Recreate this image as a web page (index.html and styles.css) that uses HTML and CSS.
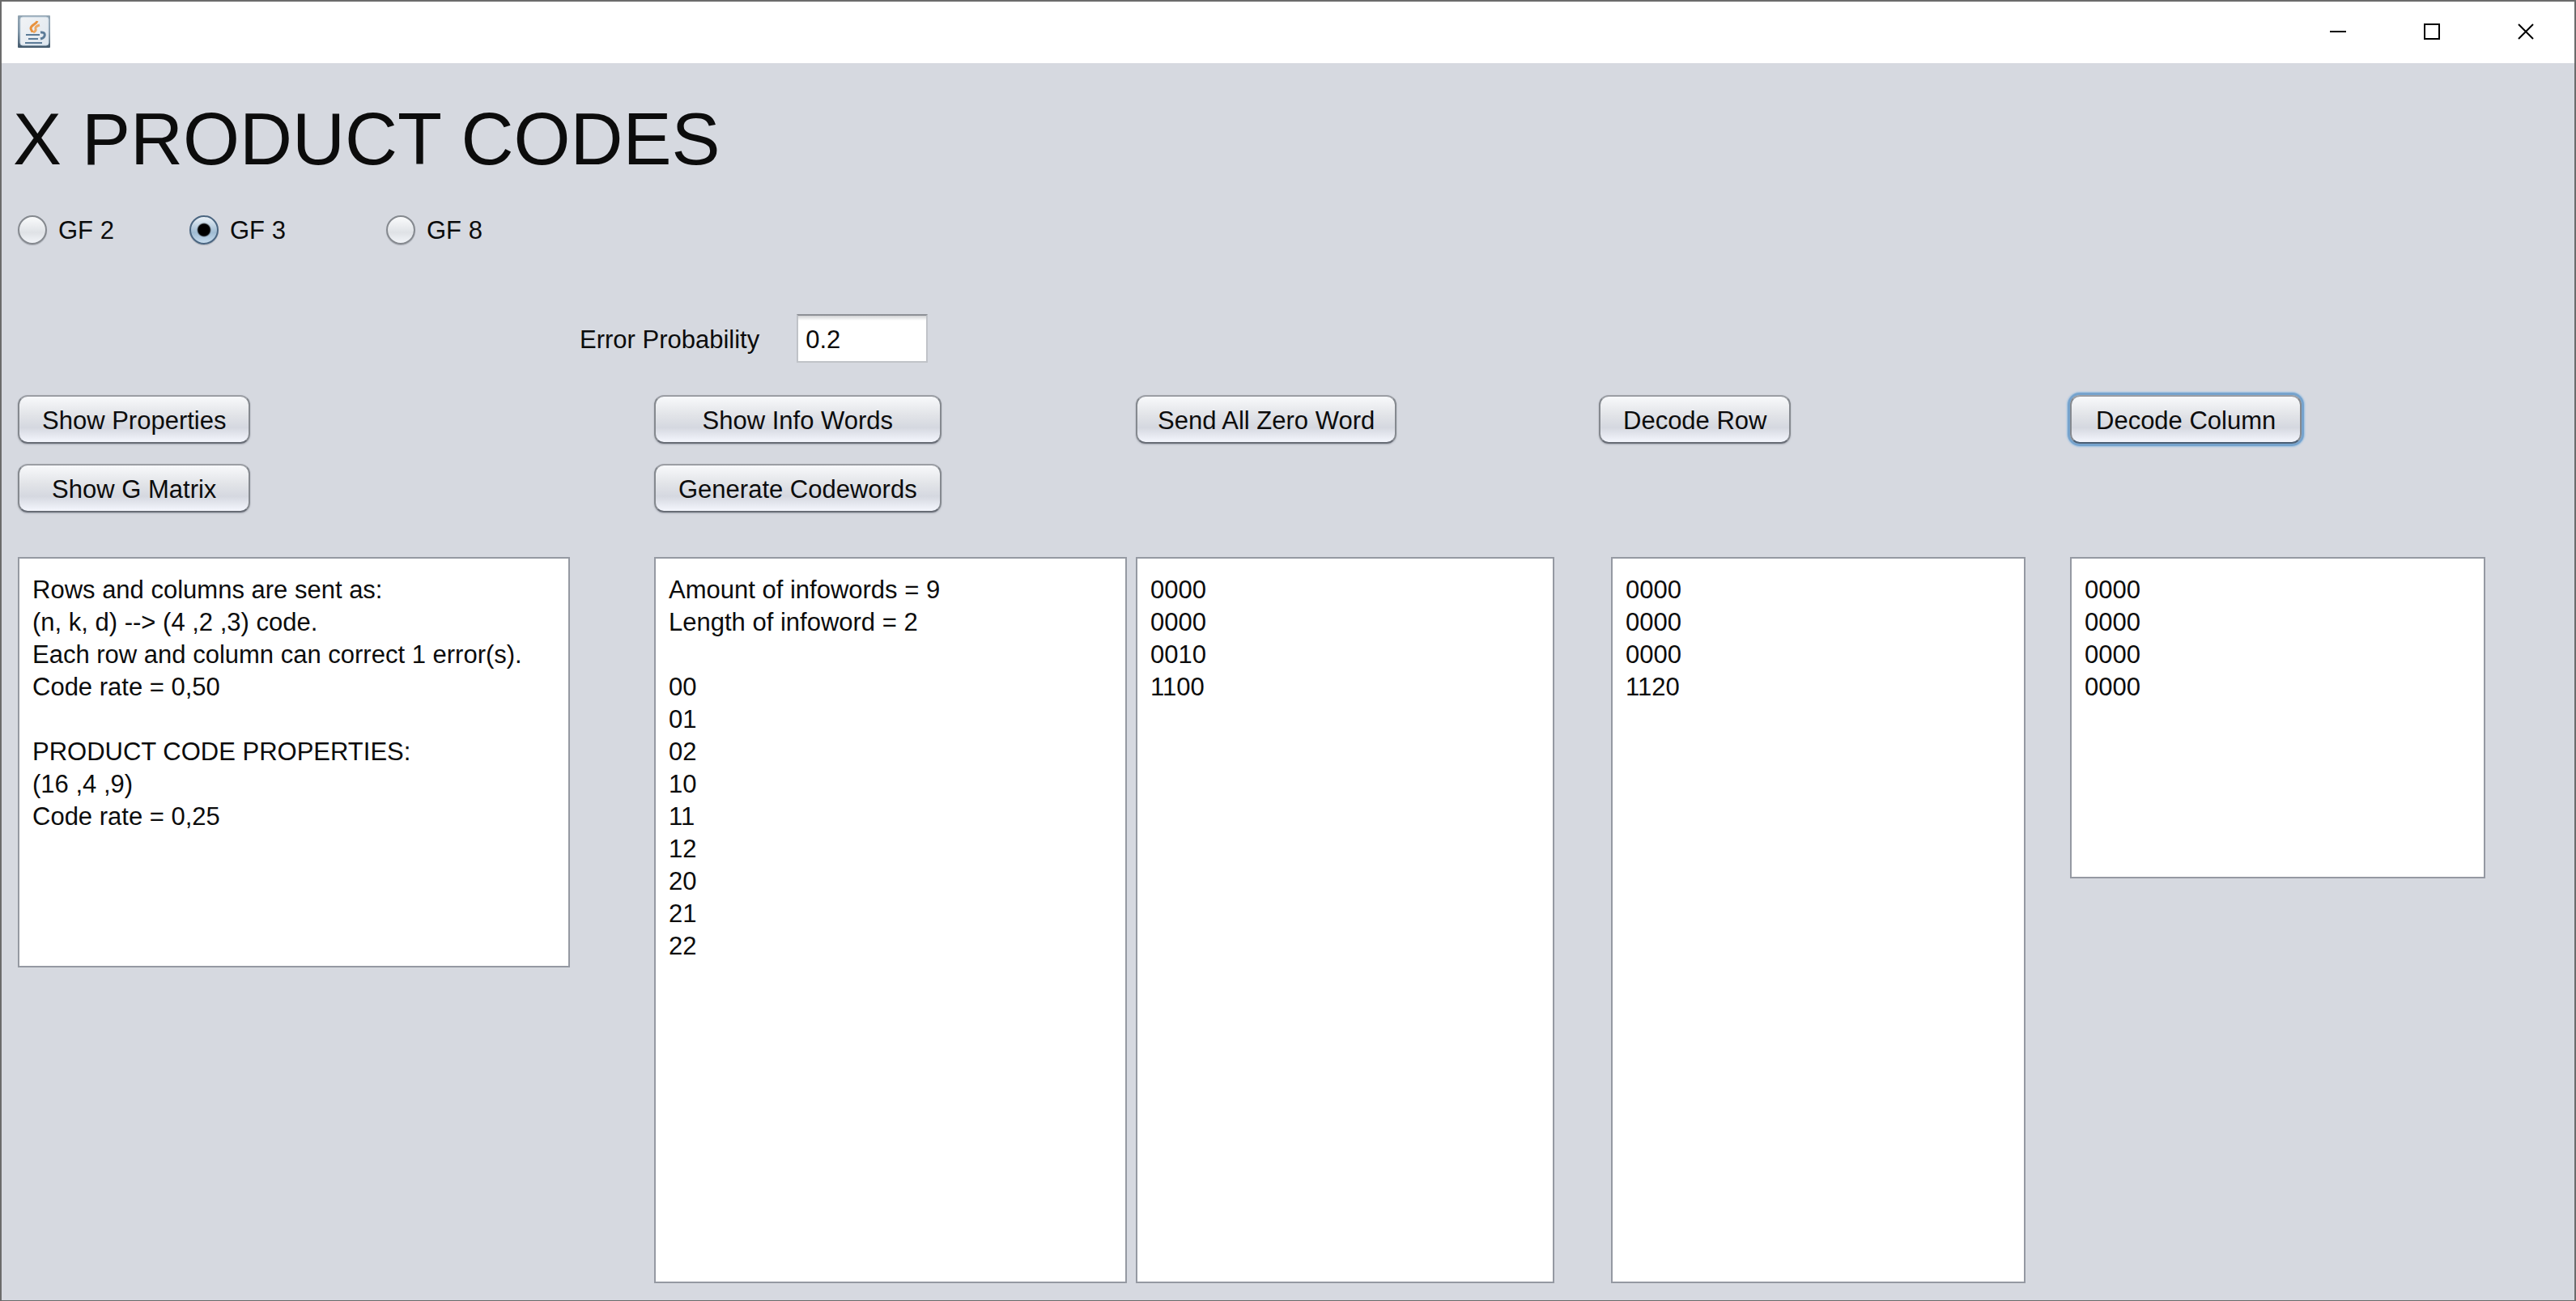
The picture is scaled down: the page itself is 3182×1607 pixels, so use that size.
FILE: index.html
```html
<!DOCTYPE html>
<html lang="en">
<head>
<meta charset="utf-8">
<title>X Product Codes</title>
<link rel="stylesheet" href="styles.css">
</head>
<body>
<div class="window">
  <header class="titlebar">
    <svg class="app-icon" viewBox="0 0 40 40" aria-hidden="true">
      <defs>
        <linearGradient id="frame" x1="0" y1="0" x2="0" y2="1">
          <stop offset="0" stop-color="#92a4b2"/>
          <stop offset="0.5" stop-color="#7d93a5"/>
          <stop offset="1" stop-color="#42586b"/>
        </linearGradient>
        <linearGradient id="plate" x1="0" y1="0" x2="1" y2="1">
          <stop offset="0" stop-color="#f1f3f5"/>
          <stop offset="1" stop-color="#dfe7ef"/>
        </linearGradient>
      </defs>
      <rect width="40" height="40" rx="1" fill="url(#frame)"/>
      <rect x="3" y="2" width="35" height="35" rx="3" fill="url(#plate)" stroke="#c3d3e0"/>
      <path d="M24 7c-1 4-8 5-8 9 0 2 2 3 2 5" fill="none" stroke="#e8913c" stroke-width="3"/>
      <path d="M27 12c-4 1-6 3-5 5 1 2-1 3-3 4" fill="none" stroke="#eda762" stroke-width="3"/>
      <path d="M10 24h17M13 29h12M9 34h21" fill="none" stroke="#5b7b98" stroke-width="2"/>
      <path d="M28 21c7-1 7 6 0 8" fill="none" stroke="#5b7b98" stroke-width="3"/>
    </svg>
    <div class="window-controls">
      <button class="control" aria-label="Minimize"><svg viewBox="0 0 20 20"><path d="M0 10h20"/></svg></button>
      <button class="control" aria-label="Maximize"><svg viewBox="0 0 20 20"><path d="M1 1h18v18H1z"/></svg></button>
      <button class="control" aria-label="Close"><svg viewBox="0 0 20 20"><path d="M1 1l18 18M19 1L1 19"/></svg></button>
    </div>
  </header>

  <main class="client">
    <h1 class="title">X PRODUCT CODES</h1>

    <div class="fields" role="radiogroup" aria-label="Field">
      <label class="field"><input class="radio" type="radio" name="gf">GF 2</label>
      <label class="field"><input class="radio" type="radio" name="gf" checked>GF 3</label>
      <label class="field"><input class="radio" type="radio" name="gf">GF 8</label>
    </div>

    <div class="error-row">
      <label for="error">Error Probability</label>
      <input class="textbox" id="error" type="text" value="0.2">
    </div>

    <div class="columns">
      <section class="column properties">
        <div class="actions">
          <button class="button">Show Properties</button>
          <button class="button">Show G Matrix</button>
        </div>
        <textarea class="output" aria-label="Properties" readonly>Rows and columns are sent as:
(n, k, d) --&gt; (4 ,2 ,3) code.
Each row and column can correct 1 error(s).
Code rate = 0,50

PRODUCT CODE PROPERTIES:
(16 ,4 ,9)
Code rate = 0,25</textarea>
      </section>
      <section class="column words">
        <div class="actions">
          <button class="button">Show Info Words</button>
          <button class="button">Generate Codewords</button>
        </div>
        <textarea class="output" aria-label="Info words" readonly>Amount of infowords = 9
Length of infoword = 2

00
01
02
10
11
12
20
21
22</textarea>
      </section>
      <section class="column sent">
        <div class="actions">
          <button class="button">Send All Zero Word</button>
        </div>
        <textarea class="output" aria-label="Received word" readonly>0000
0000
0010
1100</textarea>
      </section>
      <section class="column rows">
        <div class="actions">
          <button class="button">Decode Row</button>
        </div>
        <textarea class="output" aria-label="Decoded rows" readonly>0000
0000
0000
1120</textarea>
      </section>
      <section class="column cols">
        <div class="actions">
          <button class="button focused">Decode Column</button>
        </div>
        <textarea class="output" aria-label="Decoded columns" readonly>0000
0000
0000
0000</textarea>
      </section>
    </div>
  </main>
</div>
</body>
</html>
```
FILE: styles.css
```css
* {
  box-sizing: border-box;
}

body {
  margin: 0;
  color: #0c0c0c;
  font: 31px/40px "Liberation Sans", Arial, sans-serif;
}

button,
input,
textarea {
  margin: 0;
  color: inherit;
  font: inherit;
}

.window {
  display: flex;
  flex-direction: column;
  min-height: 100vh;
  border: 2px solid #6b6b6b;
  border-bottom-width: 1px;
  background: #d6d9e0;
}

/* Title bar */
.titlebar {
  display: flex;
  align-items: center;
  justify-content: space-between;
  height: 76px;
  padding: 0 2px 2px 20px;
  background: #fff;
}

.app-icon {
  width: 40px;
  height: 40px;
}

.window-controls {
  display: flex;
}

.control {
  display: flex;
  align-items: center;
  justify-content: center;
  width: 116px;
  height: 72px;
  padding: 0;
  border: 0;
  background: none;
}

.control svg {
  width: 20px;
  height: 20px;
  fill: none;
  stroke: #000;
  stroke-width: 2;
}

/* Form */
.client {
  display: flex;
  flex: 1;
  flex-direction: column;
  padding: 42px 0 21px 20px;
}

.title {
  margin: 0 0 0 -6px;
  font-size: 90px;
  font-weight: 400;
  line-height: 104px;
}

.fields {
  display: grid;
  grid-template-columns: 212px 243px auto;
  margin-top: 40px;
}

.field {
  display: flex;
  align-items: center;
  gap: 14px;
  padding-top: 1px;
}

.radio {
  width: 36px;
  height: 36px;
  margin-bottom: 2px;
  border: 2px solid #85898f;
  border-radius: 50%;
  appearance: none;
  background: linear-gradient(#fafbfc, #dfe2e6 60%, #f2f4f8);
  box-shadow: 0 1px 1px #a9adb5;
}

.radio:checked {
  border-color: #4a6580;
  background:
    radial-gradient(circle, #000 0 7px, transparent 9px),
    linear-gradient(#eaf1f7, #9fbbd2 60%, #c6dcee);
}

.error-row {
  display: flex;
  align-items: baseline;
  gap: 46px;
  margin-top: 83px;
  padding-left: 694px;
}

.textbox {
  width: 162px;
  height: 60px;
  padding: 3px 9px 0;
  border: 2px solid #c0c3c8;
  border-top-color: #8d9096;
  background: linear-gradient(#d2d3d5, #fff 6px);
}

.columns {
  display: grid;
  flex: 1;
  grid-template-columns:
    minmax(0, 786fr) minmax(0, 595fr) minmax(0, 572fr)
    minmax(0, 582fr) minmax(0, 623fr);
  margin-top: 40px;
}

.column {
  display: flex;
  flex-direction: column;
}

.actions {
  display: grid;
  align-content: start;
  align-self: start;
  gap: 25px;
  min-height: 200px;
}

.button {
  height: 60px;
  padding: 3px 28px 0;
  border: 2px solid #85898f;
  border-top-color: #9b9ea4;
  border-bottom-color: #686d76;
  border-radius: 12px;
  background: linear-gradient(#f8f9fb, #e2e4e8 40%, #d5d8e0 68%, #f4f6fd);
  box-shadow: 0 1px 2px #a5a9b2;
}

.sent .button {
  padding-inline: 25px;
}

.cols .button {
  padding-inline: 30px;
}

.focused {
  border-bottom-color: #4c6075;
  box-shadow: 0 0 0 3px #76a3cd, 0 0 2px 4px #9bbfe0;
}

.output {
  flex: 1;
  padding: 19px 16px 0;
  border: 2px solid #9599a2;
  outline: 0;
  background: #fff;
  overflow: hidden;
  resize: none;
}

.properties .output {
  flex: none;
  height: 507px;
  margin-right: 104px;
}

.words .output {
  margin-right: 11px;
}

.sent .output {
  margin-right: 55px;
}

.rows .output {
  margin: 0 55px 0 15px;
}

.cols .output {
  flex: none;
  height: 397px;
  margin-right: 110px;
}
```
